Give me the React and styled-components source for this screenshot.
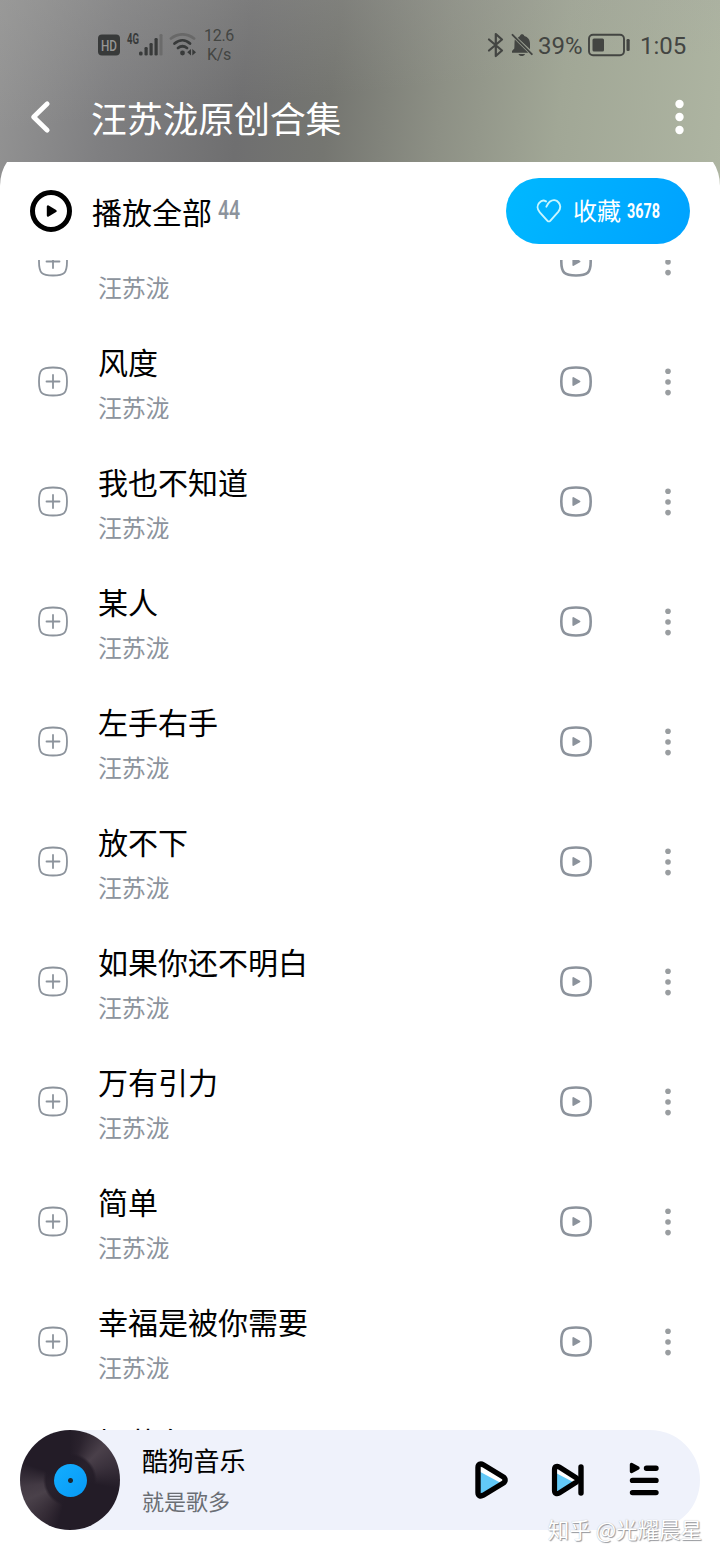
import React from "react";
import styled, { createGlobalStyle } from "styled-components";

const GlobalStyle = createGlobalStyle`
  * {
    box-sizing: border-box;
  }

  body {
    margin: 0;
    background: #fff;
    font-family: Roboto, "Noto Sans CJK SC", sans-serif;
  }
`;

const grey = "#8c939c";

const songs = [
  { title: "", artist: "汪苏泷" },
  { title: "风度", artist: "汪苏泷" },
  { title: "我也不知道", artist: "汪苏泷" },
  { title: "某人", artist: "汪苏泷" },
  { title: "左手右手", artist: "汪苏泷" },
  { title: "放不下", artist: "汪苏泷" },
  { title: "如果你还不明白", artist: "汪苏泷" },
  { title: "万有引力", artist: "汪苏泷" },
  { title: "简单", artist: "汪苏泷" },
  { title: "幸福是被你需要", artist: "汪苏泷" },
  { title: "埋葬冬天", artist: "" },
];

const Page = styled.div`
  width: 720px;
  height: 1560px;
  overflow: hidden;
  display: flex;
  flex-direction: column;
  position: relative;
  background: linear-gradient(
        174deg,
        rgba(165, 165, 162, 0.3) 0,
        rgba(165, 165, 162, 0) 130px
      )
      0 0 / 720px 200px no-repeat,
    linear-gradient(
        97deg,
        #949494 0%,
        #7f7f81 16%,
        #6f6f70 34%,
        #757671 46%,
        #8d9085 61%,
        #a1a796 77%,
        #aeb5a2 100%
      )
      0 0 / 720px 200px no-repeat,
    #fff;
`;

const StatusBar = styled.div`
  height: 80px;
  flex: none;
  display: flex;
  align-items: center;
  padding: 9px 34px 0 98px;
  color: #434542;

  svg {
    display: block;
    flex: none;
  }
`;

const StatusLeft = styled.div`
  display: flex;
  align-items: center;
  gap: 5px;
`;

const Speed = styled.div`
  width: 36px;
  font-size: 16px;
  line-height: 19px;
  text-align: center;
  letter-spacing: -0.3px;
`;

const StatusRight = styled.div`
  margin-left: auto;
  display: flex;
  align-items: center;
  font-size: 24px;
  line-height: 28px;

  svg + svg {
    margin-left: 7px;
  }
`;

const Percent = styled.span`
  margin: 2px 4px 0 5px;
  width: 46px;
  white-space: nowrap;
`;

const Clock = styled.span`
  margin: 2px 0 0 9px;
  width: 46px;
  white-space: nowrap;
`;

const TitleBar = styled.header`
  height: 82px;
  flex: none;
  display: flex;
  align-items: center;
  padding: 0 34px 8px 29px;
  color: #fff;

  h1 {
    margin: 0 0 1px 39px;
    flex: 1;
    font-size: 36px;
    font-weight: 400;
    letter-spacing: -0.25px;
    line-height: 50px;
    font-family: "Noto Sans CJK SC", sans-serif;
  }
`;

const SheetClip = styled.div`
  height: 1268px;
  flex: none;
  overflow: hidden;
`;

const Sheet = styled.main`
  margin-top: -10px;
  padding-top: 10px;
  height: 1278px;
  background: #fff;
  border-radius: 24px 24px 0 0 / 34px 34px 0 0;
`;

const PlayAll = styled.div`
  height: 98px;
  display: flex;
  align-items: center;
  padding: 0 30px;

  h2 {
    margin: 0 0 1px 20px;
    font-size: 30px;
    font-weight: 400;
    line-height: 40px;
    color: #000;
    font-family: "Noto Sans CJK SC", sans-serif;
  }
`;

const NarrowNumber = styled.span`
  display: inline-block;
  transform: scaleX(${(props) => props.$squeeze});
  transform-origin: 0 50%;
  color: ${(props) => props.$color};
  font-size: ${(props) => props.$size}px;
  font-weight: ${(props) => props.$weight};
  line-height: 30px;
  width: ${(props) => props.$width}px;
  margin-left: 6px;
`;

const CollectButton = styled.button`
  margin-left: auto;
  width: 184px;
  height: 66px;
  border: 0;
  border-radius: 33px;
  padding: 0 0 0 30px;
  display: flex;
  align-items: center;
  color: #fff;
  background: linear-gradient(110deg, #00b8ff, #00a2ff);
  font-family: inherit;
`;

const CollectLabel = styled.span`
  margin: 0 0 3px 11px;
  font-size: 24px;
  line-height: 34px;
  font-family: "Noto Sans CJK SC", sans-serif;
`;

const List = styled.ul`
  list-style: none;
  margin: 0;
  padding: 0;
  height: 1170px;
  overflow: hidden;

  li:first-child {
    margin-top: -58px;
  }
`;

const Row = styled.li`
  height: 120px;
  display: flex;
  align-items: center;
  padding: 0 48px 0 37px;
  color: ${grey};

  svg {
    display: block;
    flex: none;
  }
`;

const SongText = styled.div`
  flex: 1;
  margin-left: 29px;
  font-family: "Noto Sans CJK SC", sans-serif;

  h3 {
    margin: -1px 0 8px;
    height: 42px;
    font-size: 30px;
    line-height: 42px;
    font-weight: 400;
    color: #000;
  }

  p {
    margin: 0;
    height: 34px;
    font-size: 24px;
    line-height: 34px;
    letter-spacing: -0.2px;
  }
`;

const MoreWrap = styled.div`
  margin-left: 71px;
`;

const Player = styled.footer`
  margin: 0 20px 30px;
  height: 100px;
  flex: none;
  display: flex;
  align-items: center;
  border-radius: 50px;
  background: #eff2fb;

  svg {
    display: block;
    flex: none;
  }
`;

const Disc = styled.div`
  width: 100px;
  height: 100px;
  flex: none;
  border-radius: 50%;
  display: flex;
  align-items: center;
  justify-content: center;
  background: radial-gradient(
      circle,
      rgba(35, 28, 39, 0.85) 24px,
      rgba(35, 28, 39, 0) 27px
    ),
    conic-gradient(
      #231c27 0deg,
      #2a222d 15deg,
      #4a404a 45deg,
      #3a313c 70deg,
      #231c27 100deg,
      #231c27 195deg,
      #342b35 215deg,
      #4a414a 245deg,
      #433a44 262deg,
      #231c27 290deg,
      #231c27 360deg
    );
`;

const DiscLabel = styled.div`
  width: 33px;
  height: 33px;
  border-radius: 50%;
  background: radial-gradient(circle, #1c2630 2px, transparent 3px),
    linear-gradient(135deg, #14aeff, #0799f5);
`;

const NowPlaying = styled.div`
  flex: 1;
  margin: 0 0 1px 22px;
  font-family: "Noto Sans CJK SC", sans-serif;

  strong {
    display: block;
    font-size: 26px;
    font-weight: 400;
    letter-spacing: -0.2px;
    line-height: 40px;
    color: #000;
  }

  span {
    display: block;
    font-size: 22px;
    line-height: 40px;
    color: #6a6e74;
  }
`;

const Controls = styled.div`
  display: flex;
  align-items: center;
  gap: 40px;
  padding-right: 39px;

  svg:last-child {
    margin-left: 3px;
  }
`;

const Watermark = styled.div`
  position: absolute;
  right: 18px;
  bottom: 15px;
  font-size: 21.5px;
  line-height: 32px;
  white-space: nowrap;
  color: #fff;
  text-shadow: 1px 1px 1px #94969b, 0 0 1px #b4b6ba;
  font-family: "Noto Sans CJK SC", sans-serif;
`;

const HdIcon = () => (
  <svg width="22" height="22" viewBox="0 0 22 22">
    <rect x="0" y="0.5" width="22" height="21" rx="4" fill="#383a3a" />
    <text
      x="3"
      y="16.5"
      fontSize="15"
      fontWeight="500"
      fill="#959595"
      textLength="16"
      lengthAdjust="spacingAndGlyphs"
    >
      HD
    </text>
  </svg>
);

const SignalIcon = () => (
  <svg width="38" height="28" viewBox="0 0 38 28">
    <text
      x="2"
      y="12.5"
      fontSize="14"
      fontWeight="700"
      fill="#383a3a"
      textLength="12"
      lengthAdjust="spacingAndGlyphs"
    >
      4G
    </text>
    <g fill="#383a3a">
      <rect x="14" y="20.5" width="3.6" height="4" rx="1.5" />
      <rect x="19.5" y="16" width="3.2" height="8.5" rx="1.3" />
      <rect x="24.5" y="12" width="3.2" height="12.5" rx="1.3" />
      <rect x="29.5" y="7" width="3.2" height="17.5" rx="1.3" />
    </g>
    <rect x="34.5" y="3" width="3" height="21.5" rx="1.3" fill="#6b6b6b" />
  </svg>
);

const WifiIcon = () => (
  <svg width="28" height="24" viewBox="0 0 28 24">
    <g fill="none" strokeWidth="2.8" strokeLinecap="round">
      <path d="M3 5.5C10 0 19 0 26 5.5" stroke="#686868" />
      <path d="M6.5 10.5C11.5 6.2 17.5 6.2 22 10.5" stroke="#383a3a" />
      <path d="M10 15C13 12.6 16 12.6 19 15" stroke="#383a3a" />
    </g>
    <circle cx="14.5" cy="20" r="2.4" fill="#383a3a" />
    <path d="M23 16v6.5l-3.8-3.2zM24.3 16v6.5l3.7-3.2z" fill="#383a3a" />
  </svg>
);

const BluetoothIcon = () => (
  <svg width="17" height="26" viewBox="0 0 17 26">
    <path
      d="M2 7.5L15 18.5L8.8 24V2L15 7.5L2 18.5"
      fill="none"
      stroke="currentColor"
      strokeWidth="2.2"
      strokeLinejoin="round"
      strokeLinecap="round"
    />
  </svg>
);

const MutedBellIcon = () => (
  <svg width="22" height="24" viewBox="0 0 22 24">
    <path
      d="M6.8 4.8L9 3C9.2 .8 13 .8 13.3 3C17 4 19 7 19 10.5V16.3z"
      fill="currentColor"
    />
    <path
      d="M3.8 6.5L17.2 19.8H1V18L3.3 15.5C3.6 12.5 3.3 9.5 3.8 6.5z"
      fill="currentColor"
    />
    <path d="M7.5 21h6.5c-.8 2.8-5.7 2.8-6.5 0z" fill="currentColor" />
    <path
      d="M1.5 1.8L20.8 21.2"
      stroke="currentColor"
      strokeWidth="1.9"
      strokeLinecap="round"
    />
  </svg>
);

const BatteryIcon = () => (
  <svg width="43" height="24" viewBox="0 0 43 24">
    <rect
      x="1"
      y="1.8"
      width="35"
      height="20.4"
      rx="4"
      fill="none"
      stroke="currentColor"
      strokeWidth="1.9"
    />
    <rect x="4.5" y="5.5" width="11.5" height="13" rx="1.5" fill="currentColor" />
    <rect x="38.5" y="6" width="3.2" height="12" rx="1.3" fill="currentColor" />
  </svg>
);

const BackIcon = () => (
  <svg width="23" height="36" viewBox="0 0 23 36">
    <path
      d="M18.2 4.8L4.6 18L18.2 31.2"
      fill="none"
      stroke="currentColor"
      strokeWidth="4.8"
      strokeLinecap="round"
      strokeLinejoin="round"
    />
  </svg>
);

const HeaderMoreIcon = () => (
  <svg width="12" height="38" viewBox="0 0 12 38" fill="currentColor">
    <circle cx="5.5" cy="6" r="4.2" />
    <circle cx="5.5" cy="19" r="4.2" />
    <circle cx="5.5" cy="32" r="4.2" />
  </svg>
);

const PlayAllIcon = () => (
  <svg width="42" height="42" viewBox="0 0 42 42">
    <circle cx="21" cy="21" r="18.5" fill="none" stroke="#000" strokeWidth="5" />
    <path
      d="M18 16.5v9l7.5-4.5z"
      stroke="#000"
      strokeWidth="2.4"
      strokeLinejoin="round"
    />
  </svg>
);

const HeartIcon = () => (
  <svg width="26" height="26" viewBox="0 0 26 26">
    <path
      d="M10.4 8.7C11.5 6.5 12.2 5 14 3.6C16.8 1.5 20.5 1.8 22.7 4.6C25 7.7 24.5 11 22.2 13.8L14.2 22.8C13.4 23.6 12.3 23.6 11.5 22.8L3.8 14.4C1.2 11.5 .8 7.5 3.2 4.8C5.3 2.4 8.2 2.2 10 3.4"
      fill="none"
      stroke="#c8f6ff"
      strokeWidth="1.9"
      strokeLinecap="round"
      strokeLinejoin="round"
    />
  </svg>
);

const AddIcon = () => (
  <svg width="32" height="32" viewBox="0 0 32 32" fill="none" stroke="currentColor">
    <path
      d="M16 1.5C27.5 1.5 30 4 30 15.5S27.5 29.5 16 29.5S2 27 2 15.5S4.5 1.5 16 1.5z"
      strokeWidth="1.8"
    />
    <path d="M16 9v13M9.5 15.5h13" strokeWidth="1.8" strokeLinecap="round" />
  </svg>
);

const VideoIcon = () => (
  <svg width="34" height="34" viewBox="0 0 34 34">
    <path
      d="M17 2.5C28.5 2.5 31.7 5 31.7 16.5S28.5 30.5 17 30.5S2.3 28 2.3 16.5S5.5 2.5 17 2.5z"
      fill="none"
      stroke="currentColor"
      strokeWidth="2.6"
    />
    <path
      d="M14.3 13v7l6.2-3.5z"
      fill="currentColor"
      stroke="currentColor"
      strokeWidth="1.8"
      strokeLinejoin="round"
    />
  </svg>
);

const MoreIcon = () => (
  <svg width="8" height="30" viewBox="0 0 8 30" fill="#999da0">
    <circle cx="4" cy="4.2" r="2.8" />
    <circle cx="4" cy="15" r="2.8" />
    <circle cx="4" cy="25.6" r="2.8" />
  </svg>
);

const PlayIcon = () => (
  <svg width="36" height="40" viewBox="0 0 36 40">
    <path
      d="M4 7.5C4 4.2 6.5 3.2 9.3 4.8L29 16.8C31.8 18.5 31.8 21.5 29 23.2L9.3 35.2C6.5 36.8 4 35.8 4 32.5z"
      fill="#fff"
    />
    <path d="M5.5 11.5L26 22.5L5.5 35z" fill="#62c9f7" />
    <path
      d="M4 7.5C4 4.2 6.5 3.2 9.3 4.8L29 16.8C31.8 18.5 31.8 21.5 29 23.2L9.3 35.2C6.5 36.8 4 35.8 4 32.5z"
      fill="none"
      stroke="#000"
      strokeWidth="5.4"
    />
  </svg>
);

const NextIcon = () => (
  <svg width="36" height="40" viewBox="0 0 36 40">
    <path d="M5 9L28 20L5 31z" fill="#fff" />
    <path d="M5 12.5L24 22.5L5 33z" fill="#62c9f7" />
    <path
      d="M4.5 9.5C4.5 6.5 6.6 5.6 9.3 7L26.5 18C28.5 19.2 28.5 20.8 26.5 22L9.3 33C6.6 34.4 4.5 33.5 4.5 30.5z"
      fill="none"
      stroke="#000"
      strokeWidth="5.2"
    />
    <path d="M31 7v26" stroke="#000" strokeWidth="5.4" strokeLinecap="round" />
  </svg>
);

const QueueIcon = () => (
  <svg width="32" height="40" viewBox="0 0 32 40">
    <path d="M2.5 4.5v7l6.5-3.5z" stroke="#000" strokeWidth="3.4" strokeLinejoin="round" />
    <path
      d="M17.5 8.2h9.500M3.500 20.400h23.500M3.500 32.600h23.500"
      stroke="#000"
      strokeWidth="5.4"
      strokeLinecap="round"
    />
  </svg>
);

const SongRow = ({ title, artist }) => (
  <Row>
    <AddIcon />
    <SongText>
      <h3>{title}</h3>
      <p>{artist}</p>
    </SongText>
    <VideoIcon />
    <MoreWrap>
      <MoreIcon />
    </MoreWrap>
  </Row>
);

const App = () => (
  <>
    <GlobalStyle />
    <Page>
      <StatusBar>
        <StatusLeft>
          <HdIcon />
          <SignalIcon />
          <WifiIcon />
          <Speed>
            12.6
            <br />
            K/s
          </Speed>
        </StatusLeft>
        <StatusRight>
          <BluetoothIcon />
          <MutedBellIcon />
          <Percent>39%</Percent>
          <BatteryIcon />
          <Clock>1:05</Clock>
        </StatusRight>
      </StatusBar>

      <TitleBar>
        <BackIcon />
        <h1>汪苏泷原创合集</h1>
        <HeaderMoreIcon />
      </TitleBar>

      <SheetClip>
        <Sheet>
          <PlayAll>
            <PlayAllIcon />
            <h2>播放全部</h2>
            <NarrowNumber $size={25} $squeeze={0.78} $width={24} $weight={500} $color={grey}>
              44
            </NarrowNumber>
            <CollectButton>
              <HeartIcon />
              <CollectLabel>收藏</CollectLabel>
              <NarrowNumber $size={20.5} $squeeze={0.7} $width={34} $weight={700} $color="#fff">
                3678
              </NarrowNumber>
            </CollectButton>
          </PlayAll>
          <List>
            {songs.map((song, index) => (
              <SongRow key={index} {...song} />
            ))}
          </List>
        </Sheet>
      </SheetClip>

      <Player>
        <Disc>
          <DiscLabel />
        </Disc>
        <NowPlaying>
          <strong>酷狗音乐</strong>
          <span>就是歌多</span>
        </NowPlaying>
        <Controls>
          <PlayIcon />
          <NextIcon />
          <QueueIcon />
        </Controls>
      </Player>
      <Watermark>知乎 @光耀晨星</Watermark>
    </Page>
  </>
);

export default App;
